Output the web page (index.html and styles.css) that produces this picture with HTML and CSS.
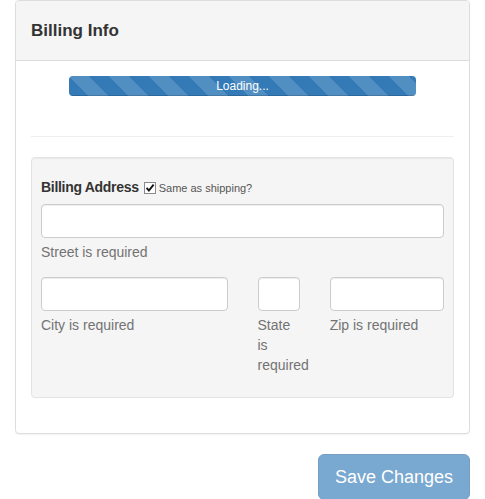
FILE: index.html
```html
<!DOCTYPE html>
<html>
<head>
<meta charset="utf-8">
<link rel="stylesheet" href="styles.css">
</head>
<body>
<div class="page">
  <div class="panel">
    <div class="panel-heading"><h3 class="panel-title">Billing Info</h3></div>
    <div class="panel-body">
      <div class="progress">
        <div class="progress-bar">Loading...</div>
      </div>
      <hr class="divider">
      <div class="well">
        <div class="label-row">
          <span class="field-label">Billing Address</span>
          <span class="checkbox"><svg width="12" height="12" viewBox="0 0 12 12"><rect x="0.5" y="0.5" width="11" height="11" fill="#fff" stroke="#8a8a8a"/><path d="M2.6 5.8 L4.9 8.6 L9.6 2.6" fill="none" stroke="#111" stroke-width="1.9"/></svg></span>
          <span class="check-text">Same as shipping?</span>
        </div>
        <div class="form-group">
          <div class="input"></div>
          <div class="help">Street is required</div>
        </div>
        <div class="row form-group">
          <div class="col col-6">
            <div class="input"></div>
            <div class="help">City is required</div>
          </div>
          <div class="col col-2">
            <div class="input"></div>
            <div class="help">State is required</div>
          </div>
          <div class="col col-4">
            <div class="input"></div>
            <div class="help">Zip is required</div>
          </div>
        </div>
      </div>
    </div>
  </div>
  <div class="actions">
    <button class="btn-save">Save Changes</button>
  </div>
</div>
</body>
</html>
```
FILE: styles.css
```css
* { box-sizing: border-box; }
html, body { margin: 0; padding: 0; background: #fff; }
body {
  font-family: "Liberation Sans", Arial, sans-serif;
  font-size: 14px;
  line-height: 20px;
  color: #333;
}
.page { padding: 0 15px; }
.panel {
  border: 1px solid #ddd;
  border-radius: 4px;
  background: #fff;
  margin-bottom: 20px;
  box-shadow: 0 1px 1px rgba(0,0,0,.05);
}
.panel-heading {
  background: #f5f5f5;
  border-bottom: 1px solid #ddd;
  border-radius: 3px 3px 0 0;
  padding: 15px 15px;
}
.panel-title {
  margin: 0;
  font-size: 17px;
  line-height: 29px;
  font-weight: bold;
  color: #333;
}
.panel-body { padding: 15px; }
.progress {
  margin: 0 38px 20px;
  height: 20px;
  border-radius: 4px;
  background: #f5f5f5;
  overflow: hidden;
}
.progress-bar {
  height: 20px;
  width: 100%;
  background-color: #337ab7;
  background-image: linear-gradient(45deg, rgba(255,255,255,.15) 25%, transparent 25%, transparent 50%, rgba(255,255,255,.15) 50%, rgba(255,255,255,.15) 75%, transparent 75%, transparent);
  background-size: 40px 40px;
  color: #fff;
  font-size: 12px;
  line-height: 20px;
  text-align: center;
  box-shadow: inset 0 -1px 0 rgba(0,0,0,.15);
}
.divider {
  margin: 40px 0 20px;
  border: 0;
  border-top: 1px solid #eee;
  height: 0;
}
.well {
  background: #f5f5f5;
  border: 1px solid #e3e3e3;
  border-radius: 4px;
  box-shadow: inset 0 1px 1px rgba(0,0,0,.05);
  padding: 19px 9px 7px;
  margin-bottom: 20px;
}
.label-row {
  display: flex;
  align-items: baseline;
  margin-bottom: 7px;
  height: 20px;
}
.field-label {
  font-weight: bold;
  letter-spacing: -0.3px;
}
.checkbox {
  display: inline-block;
  width: 12px;
  height: 12px;
  margin-left: 5px;
  align-self: center;
  position: relative;
  top: 1px;
}
.checkbox svg { display: block; }
.check-text {
  font-size: 11px;
  color: #555;
  margin-left: 3px;
}
.form-group { margin-bottom: 15px; }
.input {
  height: 34px;
  background: #fff;
  border: 1px solid #ccc;
  border-radius: 4px;
  box-shadow: inset 0 1px 1px rgba(0,0,0,.075);
}
.help {
  margin-top: 4px;
  color: #737373;
}
.row {
  display: flex;
  margin-left: -15px;
  margin-right: -15px;
}
.col { padding: 0 15px; min-width: 0; }
.col-6 { width: 50%; }
.col-2 { width: 16.6667%; }
.col-4 { width: 33.3333%; }
.actions {
  display: flex;
  justify-content: flex-end;
}
.btn-save {
  font-family: "Liberation Sans", Arial, sans-serif;
  font-size: 18px;
  line-height: 24px;
  padding: 10px 16px;
  color: #fff;
  background: #337ab7;
  border: 1px solid #2e6da4;
  border-radius: 6px;
  opacity: .65;
}
```
